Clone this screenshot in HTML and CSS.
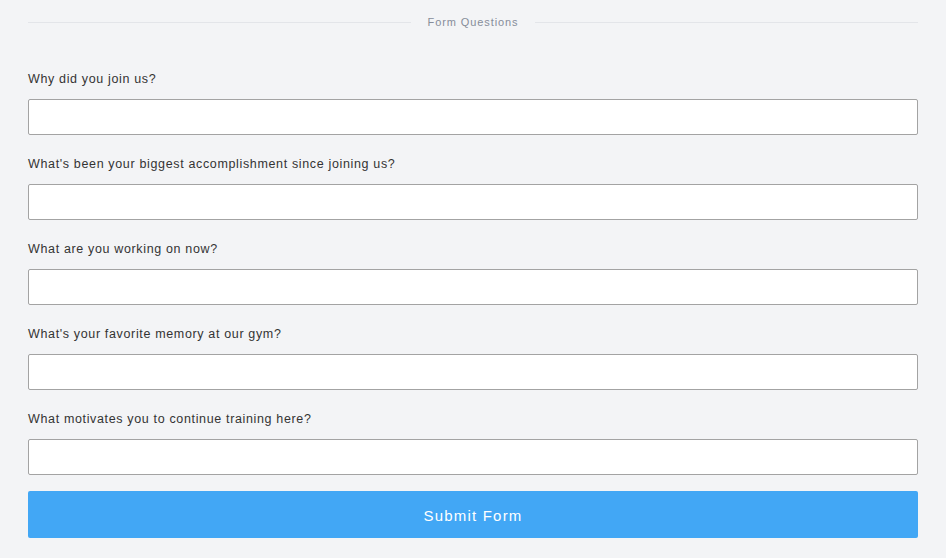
FILE: index.html
```html
<!DOCTYPE html>
<html>
<head>
<meta charset="utf-8">
<link rel="stylesheet" href="styles.css">
</head>
<body>
<div class="page">
  <div class="divider"><span class="line"></span><span class="divider-text">Form Questions</span><span class="line"></span></div>
  <form class="form">
    <div class="field">
      <label class="label">Why did you join us?</label>
      <input class="input" type="text">
    </div>
    <div class="field">
      <label class="label">What's been your biggest accomplishment since joining us?</label>
      <input class="input" type="text">
    </div>
    <div class="field">
      <label class="label">What are you working on now?</label>
      <input class="input" type="text">
    </div>
    <div class="field">
      <label class="label">What's your favorite memory at our gym?</label>
      <input class="input" type="text">
    </div>
    <div class="field">
      <label class="label">What motivates you to continue training here?</label>
      <input class="input" type="text">
    </div>
    <button class="submit" type="button">Submit Form</button>
  </form>
</div>
</body>
</html>
```
FILE: styles.css
```css
html, body {
  margin: 0;
  padding: 0;
  background: #f3f4f6;
  font-family: "Liberation Sans", Arial, sans-serif;
}
.page {
  padding: 14px 28px 0 28px;
}
.divider {
  display: flex;
  align-items: center;
  gap: 17px;
  height: 16px;
}
.line {
  flex: 1;
  height: 1px;
  background: #e3e5e9;
}
.divider-text {
  font-size: 11px;
  color: #868d9a;
  letter-spacing: 0.9px;
}
.form {
  display: flex;
  flex-direction: column;
  margin-top: 40px;
}
.field {
  display: flex;
  flex-direction: column;
  margin-bottom: 20px;
}
.field:last-of-type {
  margin-bottom: 16px;
}
.label {
  font-size: 12.5px;
  line-height: 16px;
  padding-top: 1px;
  color: #333;
  letter-spacing: 0.65px;
  margin-bottom: 12px;
}
.input {
  box-sizing: border-box;
  height: 36px;
  border: 1px solid #a3a3a3;
  border-radius: 2px;
  background: #fff;
  margin: 0;
}
.submit {
  height: 47px;
  padding-top: 2px;
  border: none;
  border-radius: 2px;
  background: #42a7f5;
  color: #fff;
  font-family: "Liberation Sans", Arial, sans-serif;
  font-size: 15px;
  letter-spacing: 1.2px;
}
```
